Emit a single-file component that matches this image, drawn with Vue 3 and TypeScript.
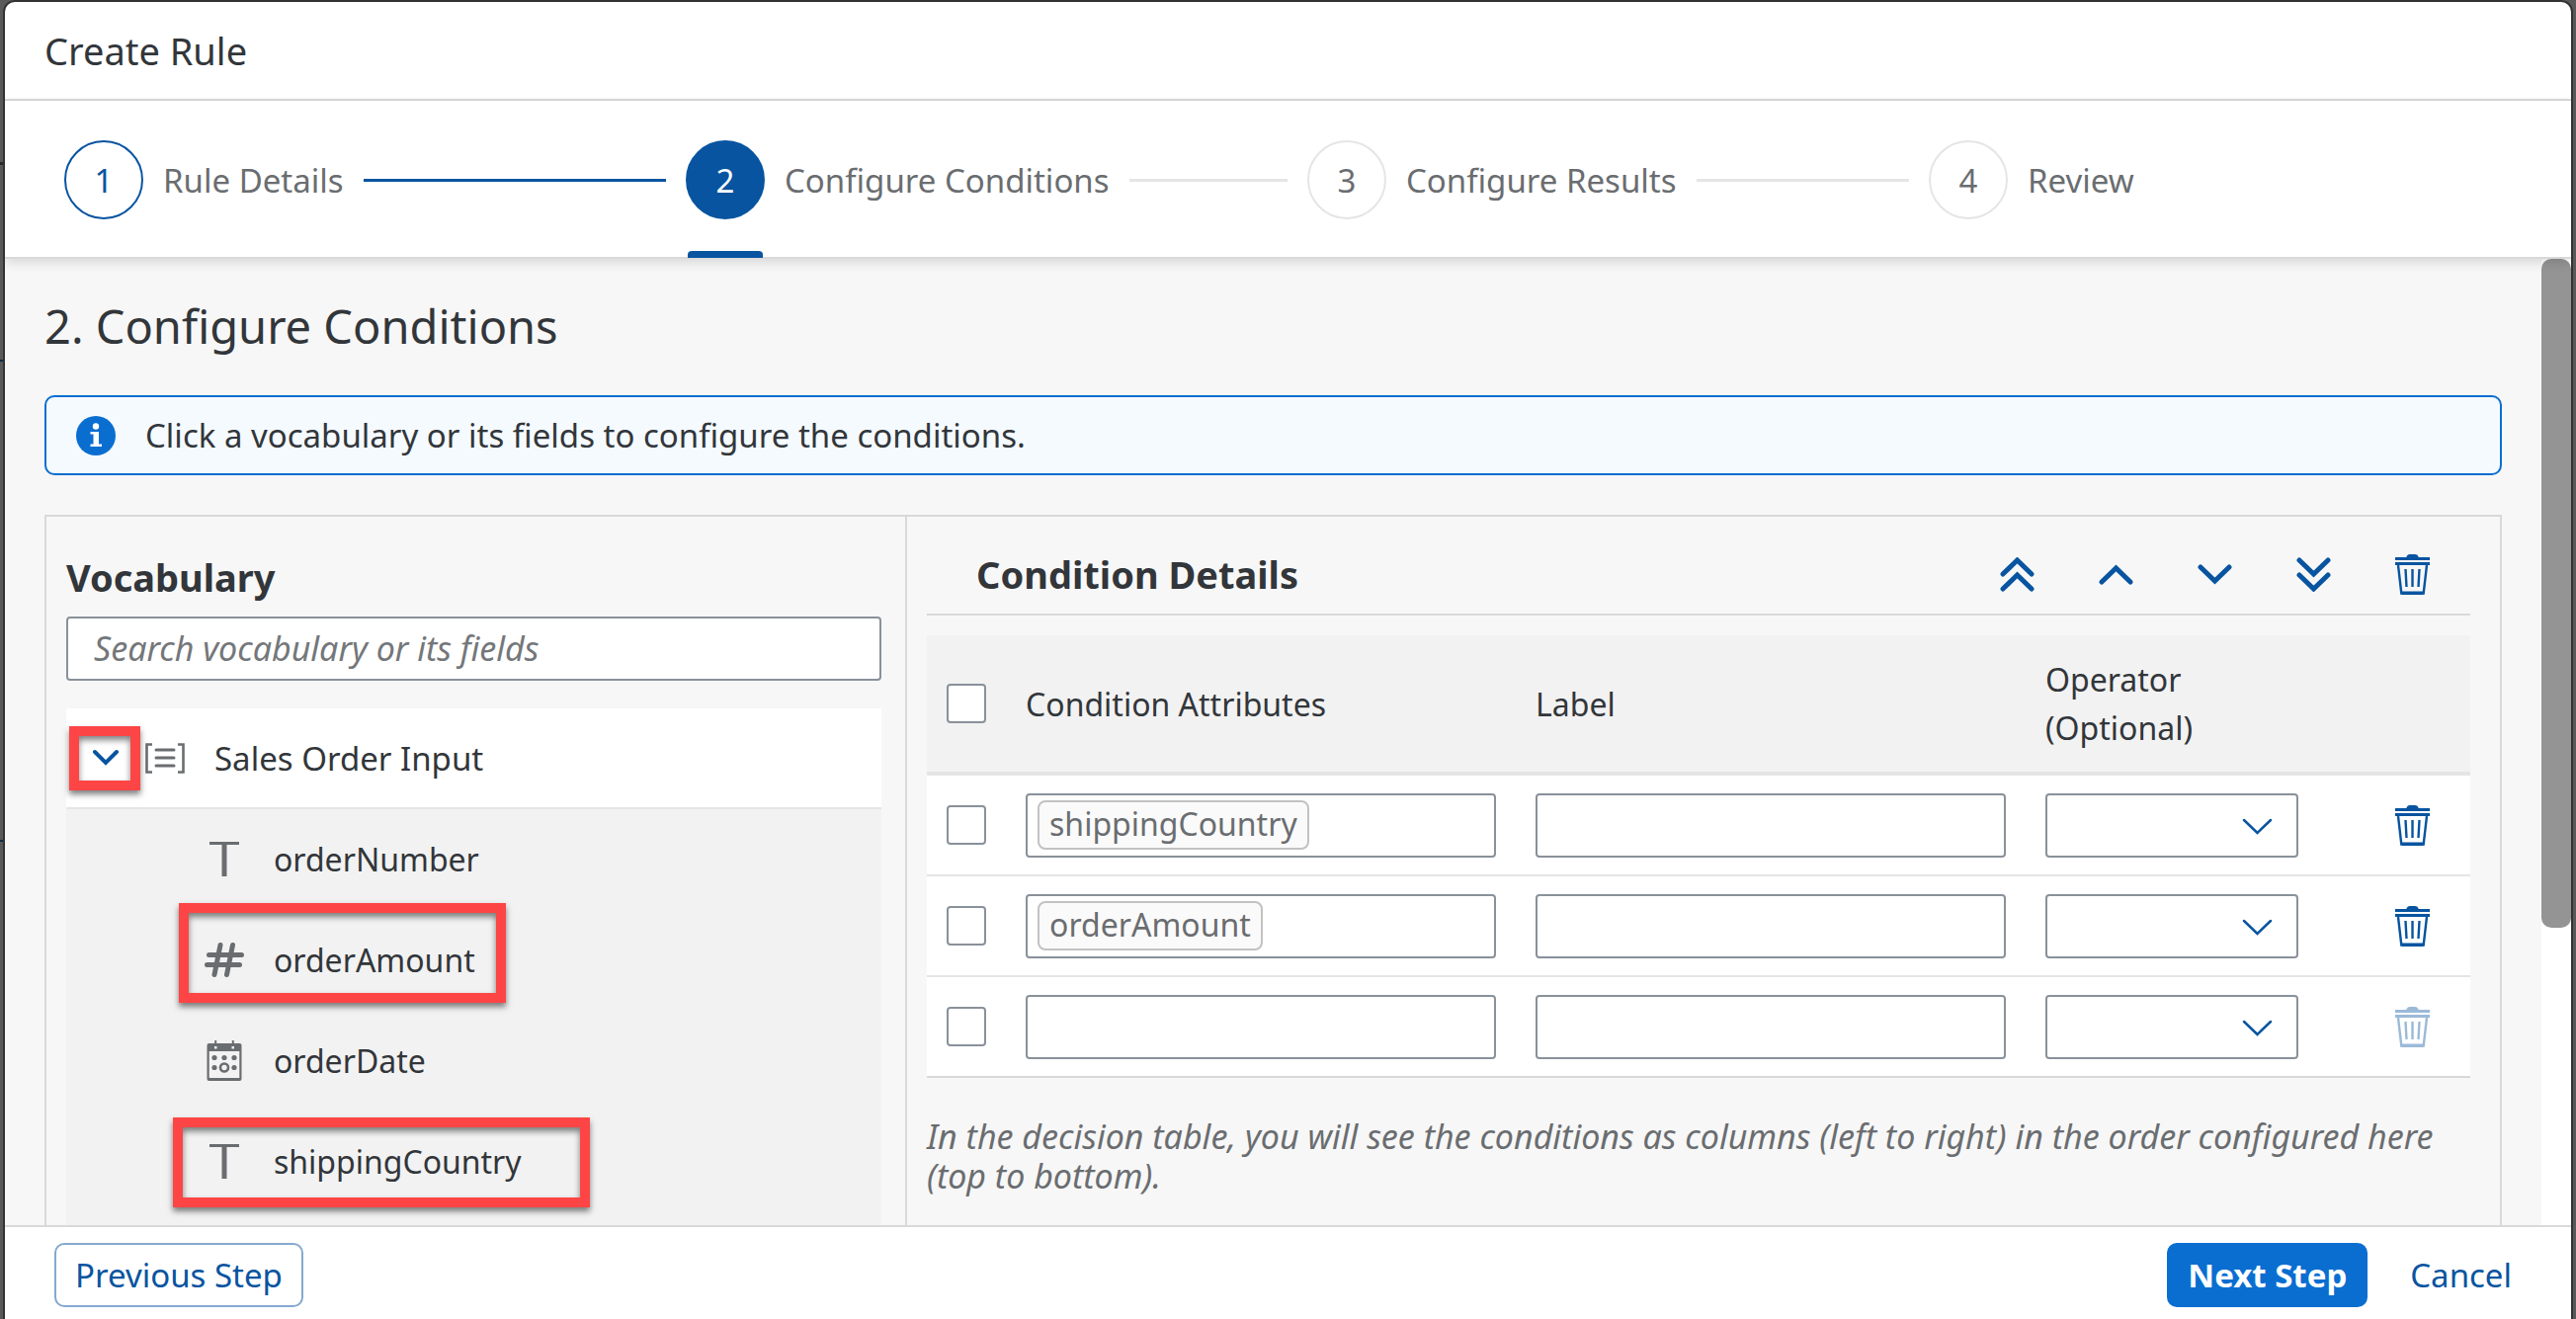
<script setup lang="ts">
import { ref } from 'vue'

type FieldKind = 'text' | 'number' | 'date'

interface Step {
  id: number
  label: string
  state: 'done' | 'current' | 'open'
}

interface VocabularyField {
  name: string
  kind: FieldKind
  mark?: string
}

interface ConditionRow {
  id: number
  attribute: string
  label: string
  operator: string
  selected: boolean
}

const steps: Step[] = [
  { id: 1, label: 'Rule Details', state: 'done' },
  { id: 2, label: 'Configure Conditions', state: 'current' },
  { id: 3, label: 'Configure Results', state: 'open' },
  { id: 4, label: 'Review', state: 'open' },
]

const fields: VocabularyField[] = [
  { name: 'orderNumber', kind: 'text' },
  { name: 'orderAmount', kind: 'number', mark: 'mark-amount' },
  { name: 'orderDate', kind: 'date' },
  { name: 'shippingCountry', kind: 'text', mark: 'mark-country' },
]

const moveActions = [
  { name: 'Move to top', paths: ['M3 17 17.5 3 32 17', 'M3 32 17.5 18 32 32'] },
  { name: 'Move up', paths: ['M3 25 17.5 11 32 25'] },
  { name: 'Move down', paths: ['M3 10 17.5 24 32 10'] },
  { name: 'Move to bottom', paths: ['M3 3 17.5 17 32 3', 'M3 18 17.5 32 32 18'] },
]

const search = ref('')
const expanded = ref(true)
const allSelected = ref(false)
const rows = ref<ConditionRow[]>([
  { id: 1, attribute: 'shippingCountry', label: '', operator: '', selected: false },
  { id: 2, attribute: 'orderAmount', label: '', operator: '', selected: false },
  { id: 3, attribute: '', label: '', operator: '', selected: false },
])

function toggleAll() {
  rows.value.forEach((row) => (row.selected = allSelected.value))
}

function removeRow(id: number) {
  rows.value = rows.value.filter((row) => row.id !== id)
}
</script>

<template>
  <div class="page">
    <!-- Shared trash symbol -->
    <svg class="symbols" width="0" height="0" aria-hidden="true">
      <symbol id="trash" viewBox="0 0 35 41">
        <path d="M11 3.5C12 1 13 0 15 0h5c2 0 3 1 4 3.5z" fill="currentColor" />
        <path d="M0 3h35v3H0zM0 8h35v3H0z" fill="currentColor" />
        <path d="M3 11 6.3 39.5h22.4L32 11" fill="none" stroke="currentColor" stroke-width="2.4" />
        <path d="M6 37.5h23V39c0 1-.5 2-2 2H8c-1.500 0-2-1-2-2z" fill="currentColor" />
        <path d="M10.500 15l1 18M17.500 15v18M24.500 15l-1 18" fill="none" stroke="currentColor" stroke-width="2.400" />
      </symbol>
    </svg>

    <div class="dialog" role="dialog" aria-labelledby="dialog-title">
      <header class="dialog-header">
        <h1 id="dialog-title">Create Rule</h1>
      </header>

      <ol class="stepper">
        <li v-for="step in steps" :key="step.id" class="step" :class="step.state">
          <button type="button" class="step-button" :aria-current="step.state === 'current' ? 'step' : undefined">
            <span class="circle">{{ step.id }}</span>
            <span class="step-label">{{ step.label }}</span>
          </button>
          <span v-if="step.id < steps.length" class="connector"></span>
        </li>
      </ol>

      <div class="scroll-area">
        <main class="content">
          <h2 class="section-title">2. Configure Conditions</h2>

          <div class="info" role="note">
            <svg width="40" height="40" viewBox="0 0 40 40" aria-hidden="true">
              <circle cx="20" cy="20" r="20" fill="#0a6ed1" />
              <circle cx="20" cy="10.500" r="3.200" fill="#fff" />
              <path d="M14.500 16h8.500v12.500h3V31h-11.500v-2.500h3V18.500h-3z" fill="#fff" />
            </svg>
            <p>Click a vocabulary or its fields to configure the conditions.</p>
          </div>

          <div class="panel">
            <section class="vocabulary">
              <h3><label for="vocabulary-search">Vocabulary</label></h3>
              <input
                id="vocabulary-search"
                v-model="search"
                class="search"
                type="text"
                placeholder="Search vocabulary or its fields"
              />
              <ul class="tree">
                <li class="tree-row root">
                  <button
                    type="button"
                    class="toggle"
                    aria-label="Toggle Sales Order Input"
                    :aria-expanded="expanded"
                    @click="expanded = !expanded"
                  >
                    <svg width="28" height="18" viewBox="0 0 28 18" aria-hidden="true">
                      <path d="M3 3 14 14 25 3" fill="none" stroke="#0854a0" stroke-width="4" stroke-linecap="round" />
                    </svg>
                  </button>
                  <svg class="kind" width="40" height="31" viewBox="0 0 40 31" aria-hidden="true">
                    <path d="M7 1.500H1.500v28H7M33 1.500h5.500v28H33" fill="none" stroke="#6a6d70" stroke-width="2.600" />
                    <path d="M11 7h18M11 15h18M11 23h18" stroke="#6a6d70" stroke-width="3" stroke-linecap="round" />
                  </svg>
                  <span>Sales Order Input</span>
                  <span class="mark mark-toggle"></span>
                </li>
                <template v-if="expanded">
                  <li v-for="field in fields" :key="field.name" class="tree-row child">
                    <svg v-if="field.kind === 'text'" class="kind" width="40" height="41" viewBox="0 0 40 41" aria-hidden="true">
                      <path d="M5 3h30v3H5zM17.500 3h5v35h-5z" fill="#6a6d70" />
                    </svg>
                    <svg v-else-if="field.kind === 'number'" class="kind" width="40" height="41" viewBox="0 0 40 41" aria-hidden="true">
                      <path
                        d="M16 5.500 10 35.500M28.500 5.500 22.500 35.500M4.500 15.500h33M2.500 25.500h33"
                        fill="none"
                        stroke="#6a6d70"
                        stroke-width="5"
                        stroke-linecap="round"
                      />
                    </svg>
                    <svg v-else class="kind" width="40" height="41" viewBox="0 0 40 41" aria-hidden="true">
                      <path
                        fill="#6a6d70"
                        fill-rule="evenodd"
                        d="M4.500 3h31a2 2 0 0 1 2 2v34a2 2 0 0 1-2 2h-31a2 2 0 0 1-2-2V5a2 2 0 0 1 2-2zM4.700 11v27h30.600V11zM10 6v2.500h2.500V6zM27.500 6v2.500H30V6z"
                      />
                      <path d="M11.200 0v4M28.800 0v4" stroke="#6a6d70" stroke-width="2" />
                      <g fill="#6a6d70">
                        <circle cx="10" cy="17.500" r="2.600" />
                        <circle cx="20" cy="17.500" r="2.600" />
                        <circle cx="30" cy="17.500" r="2.600" />
                        <circle cx="10" cy="27.500" r="2.600" />
                        <circle cx="30" cy="27.500" r="2.600" />
                      </g>
                      <circle cx="20" cy="27.500" r="4" fill="none" stroke="#6a6d70" stroke-width="2.600" />
                    </svg>
                    <span>{{ field.name }}</span>
                    <span v-if="field.mark" class="mark" :class="field.mark"></span>
                  </li>
                </template>
              </ul>
            </section>

            <section class="details">
              <div class="toolbar">
                <h3>Condition Details</h3>
                <button v-for="action in moveActions" :key="action.name" type="button" class="icon-button" :aria-label="action.name">
                  <svg width="35" height="35" viewBox="0 0 35 35" aria-hidden="true">
                    <path
                      v-for="d in action.paths"
                      :key="d"
                      :d="d"
                      fill="none"
                      stroke="currentColor"
                      stroke-width="5"
                      stroke-linecap="round"
                    />
                  </svg>
                </button>
                <button type="button" class="icon-button" aria-label="Delete selected">
                  <svg width="35" height="41" aria-hidden="true"><use href="#trash" /></svg>
                </button>
              </div>

              <table class="conditions">
                <colgroup>
                  <col class="col-check" />
                  <col />
                  <col />
                  <col class="col-operator" />
                  <col class="col-delete" />
                </colgroup>
                <thead>
                  <tr>
                    <th><input v-model="allSelected" type="checkbox" aria-label="Select all" @change="toggleAll" /></th>
                    <th scope="col">Condition Attributes</th>
                    <th scope="col">Label</th>
                    <th scope="col">Operator (Optional)</th>
                    <th></th>
                  </tr>
                </thead>
                <tbody>
                  <tr v-for="row in rows" :key="row.id">
                    <td><input v-model="row.selected" type="checkbox" aria-label="Select row" /></td>
                    <td>
                      <div class="field token-field">
                        <span v-if="row.attribute" class="token">{{ row.attribute }}</span>
                        <input type="text" aria-label="Condition attribute" />
                      </div>
                    </td>
                    <td><input v-model="row.label" class="field" type="text" aria-label="Label" /></td>
                    <td>
                      <div class="select-wrap">
                        <select v-model="row.operator" class="field" aria-label="Operator">
                          <option value=""></option>
                          <option value="=">=</option>
                          <option value=">">&gt;</option>
                          <option value="<">&lt;</option>
                        </select>
                        <svg width="31" height="17" viewBox="0 0 31 17" aria-hidden="true">
                          <path d="M2 2 15.500 15 29 2" fill="none" stroke="#0854a0" stroke-width="2.500" stroke-linecap="round" />
                        </svg>
                      </div>
                    </td>
                    <td class="delete-cell">
                      <button
                        type="button"
                        class="icon-button"
                        aria-label="Delete row"
                        :disabled="!row.attribute"
                        @click="removeRow(row.id)"
                      >
                        <svg width="35" height="41" aria-hidden="true"><use href="#trash" /></svg>
                      </button>
                    </td>
                  </tr>
                </tbody>
              </table>

              <p class="note">
                In the decision table, you will see the conditions as columns (left to right) in the order configured here
                (top to bottom).
              </p>
            </section>
          </div>
        </main>
        <div class="scrollbar"><div class="thumb"></div></div>
      </div>

      <footer class="dialog-footer">
        <button type="button" class="button secondary">Previous Step</button>
        <span class="spacer"></span>
        <button type="button" class="button primary">Next Step</button>
        <button type="button" class="button plain">Cancel</button>
      </footer>
    </div>
  </div>
</template>

<style>
html,
body {
  margin: 0;
  background: #595959;
}
</style>

<style scoped>
* {
  box-sizing: border-box;
}

.page {
  display: flex;
  height: 100vh;
  padding: 2px 5px 0;
  background:
    linear-gradient(#262a2d, #262a2d) 0 164px / 5px 3px no-repeat,
    linear-gradient(#0f2a45, #0f2a45) 0 364px / 5px 2px no-repeat,
    linear-gradient(#0f2a45, #0f2a45) 0 850px / 5px 2px no-repeat,
    #595959;
  font-family: "Noto Sans", "Open Sans", sans-serif;
  font-size: 33px;
  color: #32363a;
  overflow: hidden;
}

.symbols {
  position: absolute;
}

h1,
h2,
h3,
p,
ol,
ul {
  margin: 0;
  padding: 0;
  list-style: none;
}

button,
input,
select {
  font: inherit;
  color: inherit;
}

button {
  padding: 0;
  border: 0;
  background: none;
  cursor: pointer;
}

svg {
  display: block;
  flex: none;
}

.dialog {
  flex: 1;
  min-width: 0;
  display: flex;
  flex-direction: column;
  background: #fff;
  border-radius: 10px 10px 0 0;
  box-shadow: 0 0 0 2px #333;
  overflow: hidden;
}

.dialog-header {
  padding: 24px 40px;
  border-bottom: 2px solid #d9d9d9;
}

.dialog-header h1 {
  font-size: 38px;
  line-height: 50px;
  font-weight: 400;
}

/* Wizard progress */
.stepper {
  position: relative;
  z-index: 1;
  display: grid;
  grid-template-columns: repeat(4, 1fr);
  padding: 0 21px 0 60px;
  background: #fff;
  border-bottom: 2px solid #d9d9d9;
  box-shadow: 0 4px 10px rgba(0, 0, 0, 0.12);
}

.step {
  position: relative;
  display: flex;
  align-items: center;
  gap: 20px;
  padding: 40px 20px 38px 0;
}

.step-button {
  display: flex;
  align-items: center;
  gap: 20px;
  color: #6a6d70;
  white-space: nowrap;
}

.circle {
  display: flex;
  align-items: center;
  justify-content: center;
  width: 80px;
  height: 80px;
  border: 2px solid #e5e5e5;
  border-radius: 50%;
}

.done .circle {
  border-color: #0854a0;
  color: #0854a0;
}

.current .circle {
  border-color: #0854a0;
  background: #0854a0;
  color: #fff;
}

.current::after {
  content: "";
  position: absolute;
  left: 2px;
  bottom: -1px;
  width: 76px;
  height: 7px;
  border-radius: 4px 4px 0 0;
  background: #0854a0;
}

.connector {
  flex: 1;
  height: 3px;
  background: #e5e5e5;
}

.done .connector {
  background: #0854a0;
}

/* Scrolling body */
.scroll-area {
  flex: 1;
  min-height: 0;
  display: flex;
  background: #f7f7f7;
}

.content {
  flex: 1;
  min-width: 0;
  display: flex;
  flex-direction: column;
  padding: 36px 40px 0;
  overflow: hidden;
}

.section-title {
  font-size: 47px;
  line-height: 64px;
  font-weight: 400;
}

.info {
  display: flex;
  align-items: center;
  gap: 30px;
  min-height: 81px;
  margin-top: 38px;
  padding: 0 30px;
  border: 2px solid #0a6ed1;
  border-radius: 10px;
  background: #f5faff;
}

.panel {
  flex: 1 0 auto;
  display: grid;
  grid-template-columns: 35% 1fr;
  margin-top: 40px;
  border: 2px solid #d9d9d9;
  border-bottom: 0;
}

.vocabulary {
  display: flex;
  flex-direction: column;
  padding: 36px 24px 0 20px;
}

h3 {
  font-size: 38px;
  line-height: 50px;
  font-weight: 700;
}

.search {
  display: block;
  width: 100%;
  height: 65px;
  margin-top: 15px;
  padding: 0 26px;
  border: 2px solid #89919a;
  border-radius: 4px;
  background: #fff;
}

.search::placeholder {
  color: #74777a;
  font-size: 34px;
  font-style: italic;
  opacity: 1;
}

.tree {
  flex: 1;
  margin-top: 28px;
  background: #f2f2f2;
}

.tree-row {
  position: relative;
  display: flex;
  align-items: center;
  height: 102px;
  border-bottom: 2px solid #f2f2f2;
}

.root {
  border-color: #e5e5e5;
  background: #fff;
}

.child {
  padding-left: 140px;
  font-size: 32px;
}

.toggle {
  display: flex;
  justify-content: center;
  width: 80px;
}

.kind {
  margin-right: 30px;
}

/* Highlight frames over the tree */
.mark {
  position: absolute;
  z-index: 1;
  border: 10px solid #fd4545;
  box-shadow:
    0 4px 6px rgba(0, 0, 0, 0.5),
    inset 0 4px 6px rgba(0, 0, 0, 0.5);
  pointer-events: none;
}

.mark-toggle {
  top: 18px;
  left: 3px;
  width: 72px;
  height: 65px;
}

.mark-amount {
  top: -7px;
  left: 114px;
  width: 331px;
  height: 101px;
}

.mark-country {
  top: 6px;
  left: 108px;
  width: 422px;
  height: 91px;
}

/* Condition details */
.details {
  min-width: 0;
  padding: 18px 30px 0 20px;
  border-left: 2px solid #d9d9d9;
}

.toolbar {
  display: flex;
  align-items: center;
  gap: 30px;
  height: 82px;
  padding: 0 24px 0 50px;
  border-bottom: 2px solid #d9d9d9;
}

.toolbar h3 {
  flex: 1;
}

.icon-button {
  display: inline-flex;
  align-items: center;
  justify-content: center;
  width: 70px;
  height: 65px;
  color: #0854a0;
  vertical-align: middle;
}

.icon-button:disabled {
  opacity: 0.4;
  cursor: default;
}

.conditions {
  width: 100%;
  margin-top: 20px;
  table-layout: fixed;
  border-collapse: separate;
  border-spacing: 0;
  font-size: 32px;
}

.col-check {
  width: 80px;
}

.col-operator {
  width: 296px;
}

.col-delete {
  width: 154px;
}

th {
  height: 142px;
  padding: 0 20px;
  border-bottom: 4px solid #e5e5e5;
  background: #f2f2f2;
  font-weight: 400;
  line-height: 49px;
  text-align: left;
  vertical-align: middle;
}

td {
  height: 102px;
  padding: 0 20px;
  border-bottom: 2px solid #e5e5e5;
  background: #fff;
  vertical-align: middle;
}

tbody tr:last-child td {
  border-color: #d9d9d9;
}

.delete-cell {
  padding: 0 24px 0 0;
  text-align: right;
}

input[type="checkbox"] {
  appearance: none;
  display: block;
  width: 40px;
  height: 40px;
  margin: 0;
  border: 2px solid #89919a;
  border-radius: 4px;
  background: #fff;
}

input[type="checkbox"]:checked {
  background: #0854a0;
  box-shadow: inset 0 0 0 6px #fff;
}

.field {
  display: block;
  width: 100%;
  height: 65px;
  padding: 0 20px;
  border: 2px solid #89919a;
  border-radius: 4px;
  background: #fff;
  appearance: none;
}

.token-field {
  display: flex;
  align-items: center;
  padding: 0 10px;
}

.token-field input {
  flex: 1;
  min-width: 0;
  height: 50px;
  padding: 0;
  border: 0;
  background: none;
  outline: 0;
}

.token {
  height: 50px;
  padding: 0 10px;
  border: 2px solid #c2c2c2;
  border-radius: 8px;
  background: #fafafa;
  color: #6a6d70;
  line-height: 44px;
}

.select-wrap {
  position: relative;
}

.select-wrap svg {
  position: absolute;
  top: 25px;
  right: 26px;
  pointer-events: none;
}

.note {
  margin-top: 39px;
  color: #6a6d70;
  font-size: 34px;
  line-height: 40px;
  font-style: italic;
}

.scrollbar {
  width: 30px;
  background: #fff;
}

.thumb {
  height: 69.2%;
  border-radius: 10px;
  background: #949494;
}

/* Footer */
.dialog-footer {
  display: flex;
  align-items: center;
  gap: 22px;
  padding: 16px 39px 12px 50px;
  border-top: 2px solid #d9d9d9;
  background: #fff;
}

.spacer {
  flex: 1;
}

.button {
  height: 65px;
  padding: 0 19px;
  border: 2px solid transparent;
  border-radius: 10px;
  color: #0854a0;
  white-space: nowrap;
}

.secondary {
  border-color: #84a9cf;
}

.primary {
  border-color: #0a6ed1;
  background: #0a6ed1;
  color: #fff;
  font-weight: 700;
}
</style>
